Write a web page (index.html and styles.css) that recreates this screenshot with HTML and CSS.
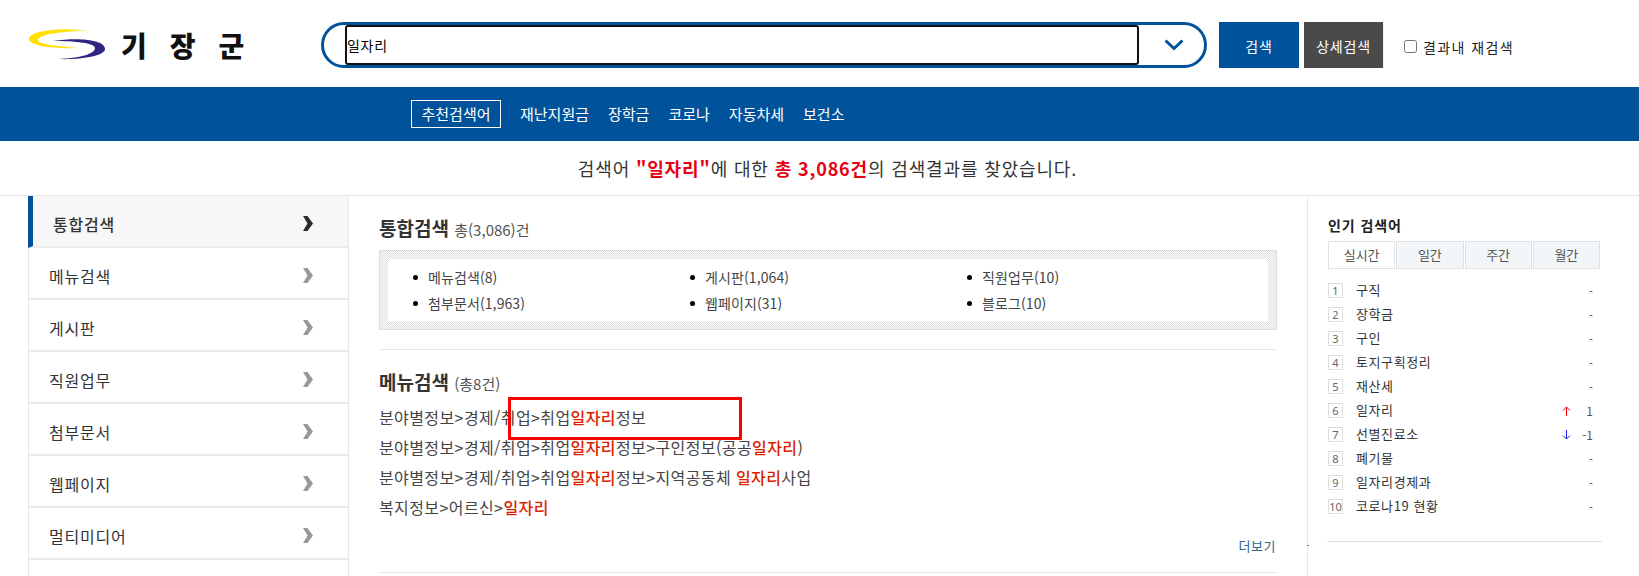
FILE: index.html
```html
<!DOCTYPE html>
<html lang="ko">
<head>
<meta charset="utf-8">
<title>기장군 통합검색</title>
<link rel="stylesheet" href="styles.css">
</head>
<body>
<header class="top">
  <a class="logo">
    <svg class="logo-mark" width="80" height="34" viewBox="28 28 80 34"><defs><linearGradient id="y" x1="0" x2="1"><stop offset="0" stop-color="#ffe000"/><stop offset=".6" stop-color="#ffe000"/><stop offset="1" stop-color="#fff6b0"/></linearGradient></defs><path fill="url(#y)" d="M90 31C65 27 29 30 29 39C29 46 55 49 78 48C55 46 38 44 38 40C38 34 65 31 90 31Z"/><path fill="#2e2583" d="M53 41C80 37 105 40 105 49C105 56 80 60 58 59C80 58 95 54 95 48C95 43 75 41 53 41Z"/></svg>
    <span class="logo-text">기장군</span>
  </a>
  <form class="search">
    <div class="search-field">
      <div class="search-input">일자리</div>
      <svg class="search-caret" width="20" height="12" viewBox="0 0 20 12"><path d="M1.5 1.5L10 9.5L18.5 1.5" fill="none" stroke="#00529b" stroke-width="3"/></svg>
    </div>
    <button class="btn btn-blue" type="button">검색</button>
    <button class="btn btn-gray" type="button">상세검색</button>
    <label class="recheck"><span class="check"></span>결과내 재검색</label>
  </form>
</header>
<nav class="rec">
  <span class="rec-label">추천검색어</span>
  <a>재난지원금</a><a>장학금</a><a>코로나</a><a>자동차세</a><a>보건소</a>
</nav>
<p class="summary">검색어 <b>"일자리"</b>에 대한 <b>총 3,086건</b>의 검색결과를 찾았습니다.</p>
<div class="layout">
  <ul class="side">
    <li class="on">통합검색<svg class="chev" width="10" height="15" viewBox="0 0 10 15"><path d="M0 0H4.5L10 7.5L4.5 15H0L4.5 7.5Z"/></svg></li>
    <li>메뉴검색<svg class="chev" width="10" height="15" viewBox="0 0 10 15"><path d="M0 0H4.5L10 7.5L4.5 15H0L4.5 7.5Z"/></svg></li>
    <li>게시판<svg class="chev" width="10" height="15" viewBox="0 0 10 15"><path d="M0 0H4.5L10 7.5L4.5 15H0L4.5 7.5Z"/></svg></li>
    <li>직원업무<svg class="chev" width="10" height="15" viewBox="0 0 10 15"><path d="M0 0H4.5L10 7.5L4.5 15H0L4.5 7.5Z"/></svg></li>
    <li>첨부문서<svg class="chev" width="10" height="15" viewBox="0 0 10 15"><path d="M0 0H4.5L10 7.5L4.5 15H0L4.5 7.5Z"/></svg></li>
    <li>웹페이지<svg class="chev" width="10" height="15" viewBox="0 0 10 15"><path d="M0 0H4.5L10 7.5L4.5 15H0L4.5 7.5Z"/></svg></li>
    <li>멀티미디어<svg class="chev" width="10" height="15" viewBox="0 0 10 15"><path d="M0 0H4.5L10 7.5L4.5 15H0L4.5 7.5Z"/></svg></li>
  </ul>
  <main class="main">
    <section class="sec sec-total">
      <h2>통합검색 <small>총(3,086)건</small></h2>
      <div class="box">
        <ul class="counts">
          <li>메뉴검색(8)</li><li>게시판(1,064)</li><li>직원업무(10)</li>
          <li>첨부문서(1,963)</li><li>웹페이지(31)</li><li>블로그(10)</li>
        </ul>
      </div>
    </section>
    <section class="sec sec-menu">
      <h2>메뉴검색 <small>(총8건)</small></h2>
      <p class="path">분야별정보&gt;경제/취업&gt;취업<em>일자리</em>정보</p>
      <p class="path">분야별정보&gt;경제/취업&gt;취업<em>일자리</em>정보&gt;구인정보(공공<em>일자리</em>)</p>
      <p class="path">분야별정보&gt;경제/취업&gt;취업<em>일자리</em>정보&gt;지역공동체 <em>일자리</em>사업</p>
      <p class="path">복지정보&gt;어르신&gt;<em>일자리</em></p>
      <a class="more">더보기</a>
    </section>
    <div class="mark"></div>
  </main>
  <aside class="aside">
    <h3>인기 검색어</h3>
    <div class="tabs"><span class="tab on">실시간</span><span class="tab">일간</span><span class="tab">주간</span><span class="tab">월간</span></div>
    <ol class="rank">
      <li><i>1</i><span class="kw">구직</span><span class="delta">-</span></li>
      <li><i>2</i><span class="kw">장학금</span><span class="delta">-</span></li>
      <li><i>3</i><span class="kw">구인</span><span class="delta">-</span></li>
      <li><i>4</i><span class="kw">토지구획정리</span><span class="delta">-</span></li>
      <li><i>5</i><span class="kw">재산세</span><span class="delta">-</span></li>
      <li><i>6</i><span class="kw">일자리</span><svg class="arr" width="9" height="10" viewBox="0 0 9 10"><path d="M4.5 10V1M1 4.5L4.5 1L8 4.5" fill="none" stroke="#f00200"/></svg><span class="delta num">1</span></li>
      <li><i>7</i><span class="kw">선별진료소</span><svg class="arr" width="9" height="10" viewBox="0 0 9 10"><path d="M4.5 0V9M1 5.5L4.5 9L8 5.5" fill="none" stroke="#1a1ae0"/></svg><span class="delta num">-1</span></li>
      <li><i>8</i><span class="kw">폐기물</span><span class="delta">-</span></li>
      <li><i>9</i><span class="kw">일자리경제과</span><span class="delta">-</span></li>
      <li><i>10</i><span class="kw">코로나19 현황</span><span class="delta">-</span></li>
    </ol>
  </aside>
</div>
</body>
</html>
```
FILE: styles.css
```css
* { box-sizing: border-box; }
html, body { margin: 0; height: 576px; overflow: hidden; background: #fff; }
body { font-family: "Noto Sans CJK KR", "Noto Sans", sans-serif; color: #333; font-size: 14px; }
ul, ol { margin: 0; padding: 0; list-style: none; }
h2, h3, p { margin: 0; }

.top { height: 87px; display: flex; align-items: flex-start; padding: 22px 0 0 28px; }
.logo { width: 293px; display: flex; align-items: center; height: 46px; }
.logo-mark { flex: none; }
.logo-text { margin-left: 13px; font-size: 28px; font-weight: 900; color: #111; letter-spacing: 23px; line-height: 30px; white-space: nowrap; }

.search { display: flex; align-items: flex-start; }
.search-field { width: 886px; height: 46px; border: 3px solid #00529b; border-radius: 23px; display: flex; align-items: center; padding-left: 21px; }
.search-input { width: 794px; height: 40px; border: 2px solid #111; border-radius: 3px; font-size: 14px; line-height: 37px; letter-spacing: .7px; color: #000; }
.search-caret { margin-left: 25px; flex: none; }
.btn { width: 80px; height: 46px; border: 0; color: #fff; font: inherit; font-size: 14px; padding: 2px 0 0; letter-spacing: .8px; }
.btn-blue { margin-left: 12px; background: #00529b; }
.btn-gray { margin-left: 5px; background: #4a4a4a; border-right: 1px solid #eee; }
.recheck { margin-left: 20px; height: 46px; padding-top: 3px; display: flex; align-items: center; font-size: 14px; color: #222; letter-spacing: 1.4px; }
.check { width: 13px; height: 13px; border: 1px solid #767676; border-radius: 2.5px; margin-right: 6px; background: #fff; }

.rec { height: 54px; background: #00529b; display: flex; align-items: center; padding: 0 0 1px 411px; color: #fff; font-size: 15px; }
.rec-label { width: 90px; height: 28px; border: 1px solid #fff; text-align: center; line-height: 25px; margin-right: 19px; }
.rec a { margin-right: 19px; }

.summary { height: 55px; border-bottom: 1px solid #e8e8e8; text-align: center; font-size: 18px; letter-spacing: .85px; line-height: 54px; color: #333; padding-left: 16px; }
.summary b { color: #e60012; font-weight: 700; }

.layout { display: flex; padding-left: 28px; }
.side { width: 321px; border-right: 1px solid #e8e8e8; border-left: 1px solid #e8e8e8; flex: none; height: 390px; }
.side li { height: 52px; border-bottom: 2px solid #ebebeb; display: flex; align-items: center; justify-content: space-between; padding: 6px 35px 0 20px; font-size: 16px; letter-spacing: .8px; color: #333; }
.side li.on { background: #f7f7f7; border-left: 5px solid #00529b; margin-left: -1px; padding-left: 20px; font-weight: 500; }
.chev { fill: #999; flex: none; margin-top: -2px; }
.on .chev { fill: #2b2b2b; }

.main { width: 959px; padding: 0 30px 0 30px; border-right: 1px solid #e8e8e8; position: relative; height: 390px; flex: none; }
.main::after { content: ""; position: absolute; right: -2px; top: 349px; width: 2px; height: 1px; background: #777; }
.sec { border-bottom: 1px solid #e8e8e8; }
.sec h2 { font-size: 19px; font-weight: 700; color: #333; line-height: 26px; white-space: nowrap; }
.sec small { font-size: 15px; font-weight: 400; color: #555; }
.sec-total { padding: 19px 0 19px; }
.box { margin-top: 7px; padding: 8px 8px; border: 1px solid #ddd; background: repeating-conic-gradient(#dcdcdc 0 25%, #fff 0 50%) 0 0 / 2px 2px; }
.counts { background: #fff; display: grid; grid-template-columns: repeat(3, 277px); padding: 6px 0 4px 40px; }
.counts li { height: 26px; line-height: 25px; font-size: 14px; letter-spacing: .1px; color: #444; position: relative; white-space: nowrap; }
.counts li::before { content: ""; position: absolute; left: -15px; top: 10px; width: 5px; height: 5px; border-radius: 50%; background: #000; }
.sec-menu { padding-top: 19px; height: 223px; position: relative; }
.path { font-size: 16px; line-height: 30px; letter-spacing: .4px; color: #444; white-space: nowrap; }
.sec-menu h2 + .path { margin-top: 5px; }
.path em { font-style: normal; font-weight: 500; color: #dd1f00; }
.more { position: absolute; right: 1px; top: 186px; font-size: 13px; letter-spacing: .5px; color: #33628e; }
.mark { position: absolute; left: 159px; top: 201px; width: 234px; height: 43px; border: 3px solid #f00; }

.aside { width: 274px; margin-left: 20px; flex: none; padding-top: 19px; height: 390px; }
.aside h3 { font-size: 14px; font-weight: 700; letter-spacing: .9px; color: #222; line-height: 20px; }
.tabs { margin-top: 6px; display: flex; width: 272px; gap: 1px; }
.tab { flex: 1; height: 28px; border: 1px solid #e0e0e0; background: #f3f6f9; text-align: center; line-height: 25px; font-size: 13px; color: #555; }
.tab.on { background: #fff; }
.rank { margin-top: 14px; padding-bottom: 18px; border-bottom: 1px solid #ddd; width: 275px; margin-left: -1px; padding-left: 1px; }
.rank li { height: 24px; display: flex; align-items: flex-start; font-size: 13px; letter-spacing: .6px; color: #333; padding-right: 9px; }
.rank i { width: 15px; height: 15px; border: 1px solid #ddd; font-style: normal; font-size: 11px; letter-spacing: 0; line-height: 13px; text-align: center; color: #666; margin-right: 13px; flex: none; font-family: "Noto Sans", sans-serif; }
.kw { line-height: 14px; flex: 1; white-space: nowrap; }
.delta { line-height: 15px; font-size: 12px; letter-spacing: 0; color: #555; }
.arr { margin: 3px 6px 0 0; }
.num { width: 16px; text-align: right; white-space: nowrap; }
```
